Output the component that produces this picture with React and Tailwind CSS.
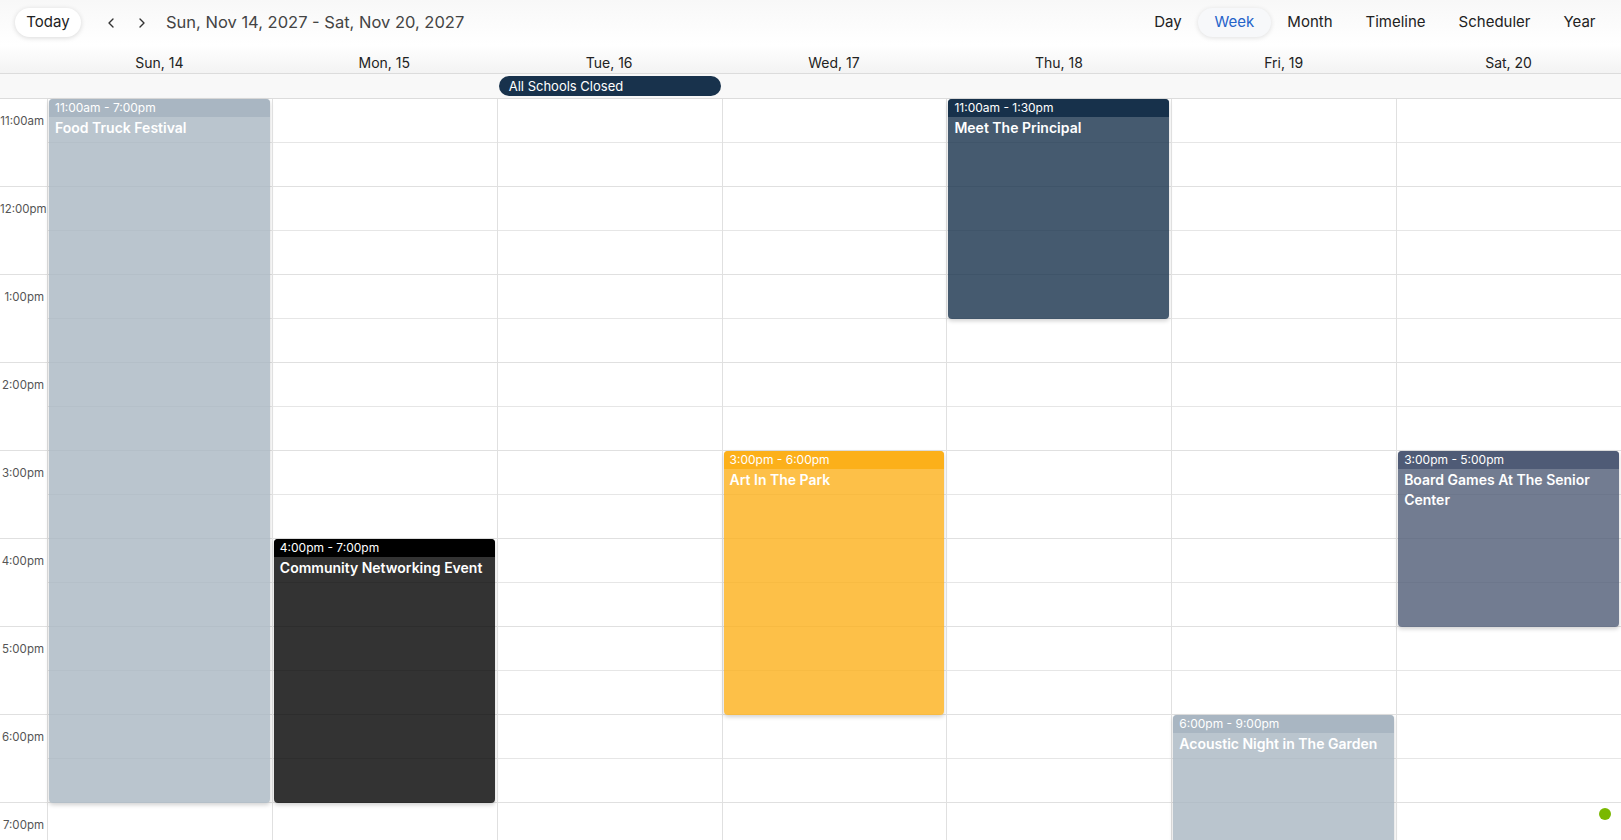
import { ChevronLeft, ChevronRight } from "lucide-react";

const days = ["Sun, 14", "Mon, 15", "Tue, 16", "Wed, 17", "Thu, 18", "Fri, 19", "Sat, 20"];
const hours = ["11:00am", "12:00pm", "1:00pm", "2:00pm", "3:00pm", "4:00pm", "5:00pm", "6:00pm", "7:00pm"];
const views = ["Day", "Week", "Month", "Timeline", "Scheduler", "Year"];

const HOUR = 88;

// start/end in hours from 11:00am
const events = [
  { day: 0, start: 0, end: 8, time: "11:00am - 7:00pm", title: "Food Truck Festival", head: "bg-[#a9b6c2]", body: "bg-[#a9b6c2]/80" },
  { day: 1, start: 5, end: 8, time: "4:00pm - 7:00pm", title: "Community Networking Event", head: "bg-[#000000]", body: "bg-[#000000]/80" },
  { day: 3, start: 4, end: 7, time: "3:00pm - 6:00pm", title: "Art In The Park", head: "bg-[#fcb01a]", body: "bg-[#fcb01a]/80" },
  { day: 4, start: 0, end: 2.5, time: "11:00am - 1:30pm", title: "Meet The Principal", head: "bg-[#17314b]", body: "bg-[#17314b]/80" },
  { day: 5, start: 7, end: 10, time: "6:00pm - 9:00pm", title: "Acoustic Night in The Garden", head: "bg-[#a9b6c2]", body: "bg-[#a9b6c2]/80" },
  { day: 6, start: 4, end: 6, time: "3:00pm - 5:00pm", title: "Board Games At The Senior Center", head: "bg-[#4f5b76]", body: "bg-[#4f5b76]/80" },
];

const Event = ({ ev }) => (
  <div
    className={`absolute left-[1px] right-[2px] rounded-[4px] overflow-hidden shadow-[0_2px_4px_rgba(0,0,0,0.18)] ${ev.body}`}
    style={{ top: ev.start * HOUR, height: ev.end * HOUR - ev.start * HOUR }}
  >
    <div className={`${ev.head} h-[18px] px-[6px] text-[12px] leading-[18px] text-white`}>{ev.time}</div>
    <div className="px-[6px] pt-[1px] text-[14px] leading-[20px] font-semibold text-white">{ev.title}</div>
  </div>
);

const App = () => {
  return (
    <div className="relative w-full h-[840px] overflow-hidden bg-white text-[#222] font-['Inter',sans-serif]">
      {/* Toolbar */}
      <div className="h-[45px] flex items-center justify-between bg-gradient-to-b from-[#f8f8f8] to-white">
        <div className="flex items-center">
          <button className="ml-[15px] h-[29px] w-[66px] rounded-full bg-white shadow-[0_1px_5px_rgba(0,0,0,0.15)] text-[15px] text-[#222]">
            Today
          </button>
          <ChevronLeft className="ml-[22px] w-[16px] h-[16px] text-[#333]" strokeWidth={2} />
          <ChevronRight className="ml-[15px] w-[16px] h-[16px] text-[#333]" strokeWidth={2} />
          <span className="ml-[16px] text-[16.5px] text-[#444]">Sun, Nov 14, 2027 - Sat, Nov 20, 2027</span>
        </div>
        <div className="flex items-center pr-[9px]">
          {views.map((v) => (
            <button
              key={v}
              className={
                v === "Week"
                  ? "h-[29px] px-[16.5px] rounded-full bg-[#f7f8fa] shadow-[0_1px_5px_rgba(0,0,0,0.12)] text-[15px] text-[#2563c9]"
                  : "h-[29px] px-[16.5px] text-[15px] text-[#222]"
              }
            >
              {v}
            </button>
          ))}
        </div>
      </div>

      {/* Day headers */}
      <div className="grid grid-cols-[47px_repeat(7,1fr)] h-[29px] border-b border-[#dcdcdc] bg-gradient-to-b from-white to-[#f3f3f3]">
        <div></div>
        {days.map((d) => (
          <div key={d} className="pt-[9px] text-center text-[14px] leading-[18px] text-[#222]">
            {d}
          </div>
        ))}
      </div>

      {/* All day row */}
      <div className="grid grid-cols-[47px_repeat(7,1fr)] h-[25px] border-b border-[#dcdcdc] bg-[#f8f8f8]">
        <div></div>
        <div></div>
        <div></div>
        <div className="pt-[2px] pl-[2px] pr-[1px]">
          <div className="h-[20px] rounded-full bg-[#18324c] pl-[10px] text-[13px] leading-[20px] text-white">
            All Schools Closed
          </div>
        </div>
      </div>

      {/* Time grid */}
      <div className="grid grid-cols-[47px_repeat(7,1fr)]">
        <div>
          {hours.map((h) => (
            <div key={h} className="h-[88px] border-b border-[#e0e0e0] pt-[15px] pr-[3px] text-right text-[11.5px] leading-[14px] text-[#555]">
              {h}
            </div>
          ))}
        </div>
        {days.map((d, i) => (
          <div key={d} className="relative border-l border-[#e0e0e0]">
            {hours.map((h) => (
              <div key={h}>
                <div className="h-[44px] border-b border-[#e6e6e6]"></div>
                <div className="h-[44px] border-b border-[#e0e0e0]"></div>
              </div>
            ))}
            {events
              .filter((e) => e.day === i)
              .map((e) => (
                <Event key={e.title} ev={e} />
              ))}
          </div>
        ))}
      </div>

      {/* Status dot */}
      <div className="absolute left-[1599px] top-[808px] w-[12px] h-[12px] rounded-full bg-[#7ab800]"></div>
    </div>
  );
};

export default App;
